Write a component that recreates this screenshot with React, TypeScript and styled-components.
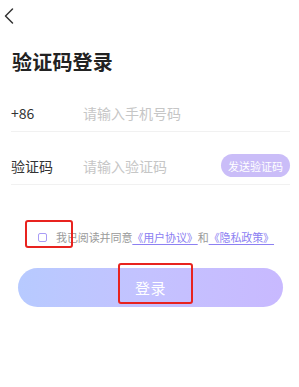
import * as React from 'react'
import styled, { createGlobalStyle } from 'styled-components'

const GlobalStyle = createGlobalStyle`
    html, body {
        margin: 0;
        padding: 0;
        background: #fff;
    }
    * {
        box-sizing: border-box;
    }
`

const Page = styled.div`
    position: relative;
    width: 299px;
    min-height: 387px;
    background: #fff;
    font-family: 'Noto Sans CJK SC', 'Noto Sans', sans-serif;
    color: #333;
    overflow: hidden;
`

const TopBar = styled.div`
    height: 32px;
    display: flex;
    align-items: center;
    padding-left: 3px;
`

const BackButton = styled.button`
    border: none;
    background: none;
    padding: 0;
    width: 12px;
    height: 20px;
    display: flex;
    align-items: center;
    cursor: pointer;
`

const Title = styled.h1`
    margin: 15px 0 0;
    padding-left: 12px;
    font-size: 20px;
    line-height: 30px;
    font-weight: 700;
    color: #222;
    letter-spacing: 0.2px;
`

const Form = styled.div`
    margin-top: 18px;
    padding: 0 9px 0 11px;
`

const Row = styled.div<{ $first?: boolean }>`
    display: flex;
    align-items: center;
    height: 37px;
    margin-top: ${p => (p.$first ? 0 : 16)}px;
    border-bottom: 1px solid #f1f1f1;
    padding-bottom: 1px;
`

const Label = styled.span`
    width: 72px;
    flex-shrink: 0;
    font-size: 14px;
    color: #333;
`

const Input = styled.input`
    flex: 1;
    min-width: 0;
    border: none;
    outline: none;
    padding: 0;
    background: transparent;
    font-family: inherit;
    font-size: 14px;
    color: #333;
    &::placeholder {
        color: #c6c6c6;
    }
`

const SendButton = styled.button`
    flex-shrink: 0;
    height: 23px;
    width: 69px;
    padding: 0;
    border: none;
    border-radius: 12px;
    background: #cabdf8;
    color: #fff;
    font-family: inherit;
    font-size: 11px;
    cursor: pointer;
`

const Agreement = styled.label`
    display: flex;
    align-items: center;
    margin-top: 42px;
    padding-left: 38px;
    height: 20px;
    font-size: 11px;
    letter-spacing: -0.1px;
    color: #9a9a9a;
    white-space: nowrap;
`

const CheckBox = styled.span`
    width: 9px;
    height: 9px;
    border: 1px solid #a99cf6;
    border-radius: 2px;
    margin-right: 9px;
    flex-shrink: 0;
`

const PolicyLink = styled.a`
    color: #8c80f2;
    text-decoration: underline;
    text-underline-offset: 2px;
`

const LoginButton = styled.button`
    display: flex;
    align-items: center;
    justify-content: center;
    margin: 21px 0 0 18px;
    width: 265px;
    height: 39px;
    border: none;
    border-radius: 20px;
    background: linear-gradient(90deg, #b7caff 0%, #c4c2ff 50%, #c8b9ff 100%);
    color: #fff;
    font-family: inherit;
    font-size: 15px;
    letter-spacing: 0.5px;
    cursor: pointer;
`

const Highlight = styled.div<{ $x: number; $y: number; $w: number; $h: number }>`
    position: absolute;
    left: ${p => p.$x}px;
    top: ${p => p.$y}px;
    width: ${p => p.$w}px;
    height: ${p => p.$h}px;
    border: 2px solid #e8231f;
    border-radius: 3px;
    pointer-events: none;
`

const BackIcon = () => (
    <svg width="12" height="20" viewBox="0 0 12 20">
        <path d="M9.5 3 L2.5 10 L9.5 17" fill="none" stroke="#333" strokeWidth="1.5" strokeLinecap="round" strokeLinejoin="round" />
    </svg>
)

const App: React.FC = () => {
    return (
        <Page>
            <GlobalStyle />
            <TopBar>
                <BackButton aria-label="返回">
                    <BackIcon />
                </BackButton>
            </TopBar>
            <Title>验证码登录</Title>
            <Form>
                <Row $first>
                    <Label>+86</Label>
                    <Input placeholder="请输入手机号码" />
                </Row>
                <Row>
                    <Label>验证码</Label>
                    <Input placeholder="请输入验证码" />
                    <SendButton>发送验证码</SendButton>
                </Row>
            </Form>
            <Agreement>
                <CheckBox />
                我已阅读并同意
                <PolicyLink>《用户协议》</PolicyLink>和<PolicyLink>《隐私政策》</PolicyLink>
            </Agreement>
            <LoginButton>登录</LoginButton>
            <Highlight $x={25} $y={220} $w={48} $h={28} />
            <Highlight $x={118} $y={263} $w={75} $h={41} />
        </Page>
    )
}

export default App
